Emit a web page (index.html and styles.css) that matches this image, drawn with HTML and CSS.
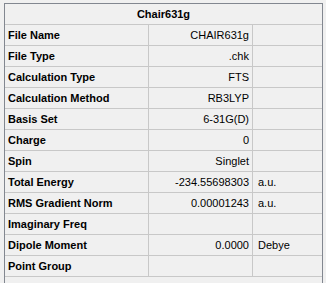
FILE: index.html
```html
<!DOCTYPE html>
<html lang="en">
<head>
    <meta charset="UTF-8">
    <title>Chair631g</title>
    <link rel="stylesheet" href="styles.css">
</head>
<body>
    <div class="panel">
        <div class="title">Chair631g</div>
        <div class="row"><div class="key">File Name</div><div class="val">CHAIR631g</div><div class="unit"></div></div>
        <div class="row"><div class="key">File Type</div><div class="val">.chk</div><div class="unit"></div></div>
        <div class="row"><div class="key">Calculation Type</div><div class="val">FTS</div><div class="unit"></div></div>
        <div class="row"><div class="key">Calculation Method</div><div class="val">RB3LYP</div><div class="unit"></div></div>
        <div class="row"><div class="key">Basis Set</div><div class="val">6-31G(D)</div><div class="unit"></div></div>
        <div class="row"><div class="key">Charge</div><div class="val">0</div><div class="unit"></div></div>
        <div class="row"><div class="key">Spin</div><div class="val">Singlet</div><div class="unit"></div></div>
        <div class="row"><div class="key">Total Energy</div><div class="val">-234.55698303</div><div class="unit">a.u.</div></div>
        <div class="row"><div class="key">RMS Gradient Norm</div><div class="val">0.00001243</div><div class="unit">a.u.</div></div>
        <div class="row"><div class="key">Imaginary Freq</div><div class="val"></div><div class="unit"></div></div>
        <div class="row"><div class="key">Dipole Moment</div><div class="val">0.0000</div><div class="unit">Debye</div></div>
        <div class="row"><div class="key">Point Group</div><div class="val"></div><div class="unit"></div></div>
    </div>
</body>
</html>
```

FILE: styles.css
```css
body {
    margin: 0;
    background-color: #f0f0f0;
    font-family: "Liberation Sans", Arial, sans-serif;
    font-size: 11px;
    color: #000;
}
.panel {
    margin: 3px 3px 0 4px;
    height: calc(100vh - 3px);
    box-sizing: border-box;
    border: 1px solid #828790;
    border-bottom: none;
    overflow: hidden;
}
.title {
    height: 21px;
    line-height: 20px;
    border-bottom: 1px solid #c8c8c8;
    box-sizing: border-box;
    text-align: center;
    font-weight: bold;
}
.row {
    display: grid;
    grid-template-columns: 144px 104px 1fr;
    height: 21px;
}
.row > div {
    border-bottom: 1px solid #c8c8c8;
    box-sizing: border-box;
    line-height: 20px;
    white-space: nowrap;
    overflow: hidden;
}
.key {
    border-right: 1px solid #c8c8c8;
    padding-left: 3px;
    font-weight: bold;
}
.val {
    border-right: 1px solid #c8c8c8;
    padding-right: 3px;
    text-align: right;
}
.unit {
    padding-left: 5px;
}
```
